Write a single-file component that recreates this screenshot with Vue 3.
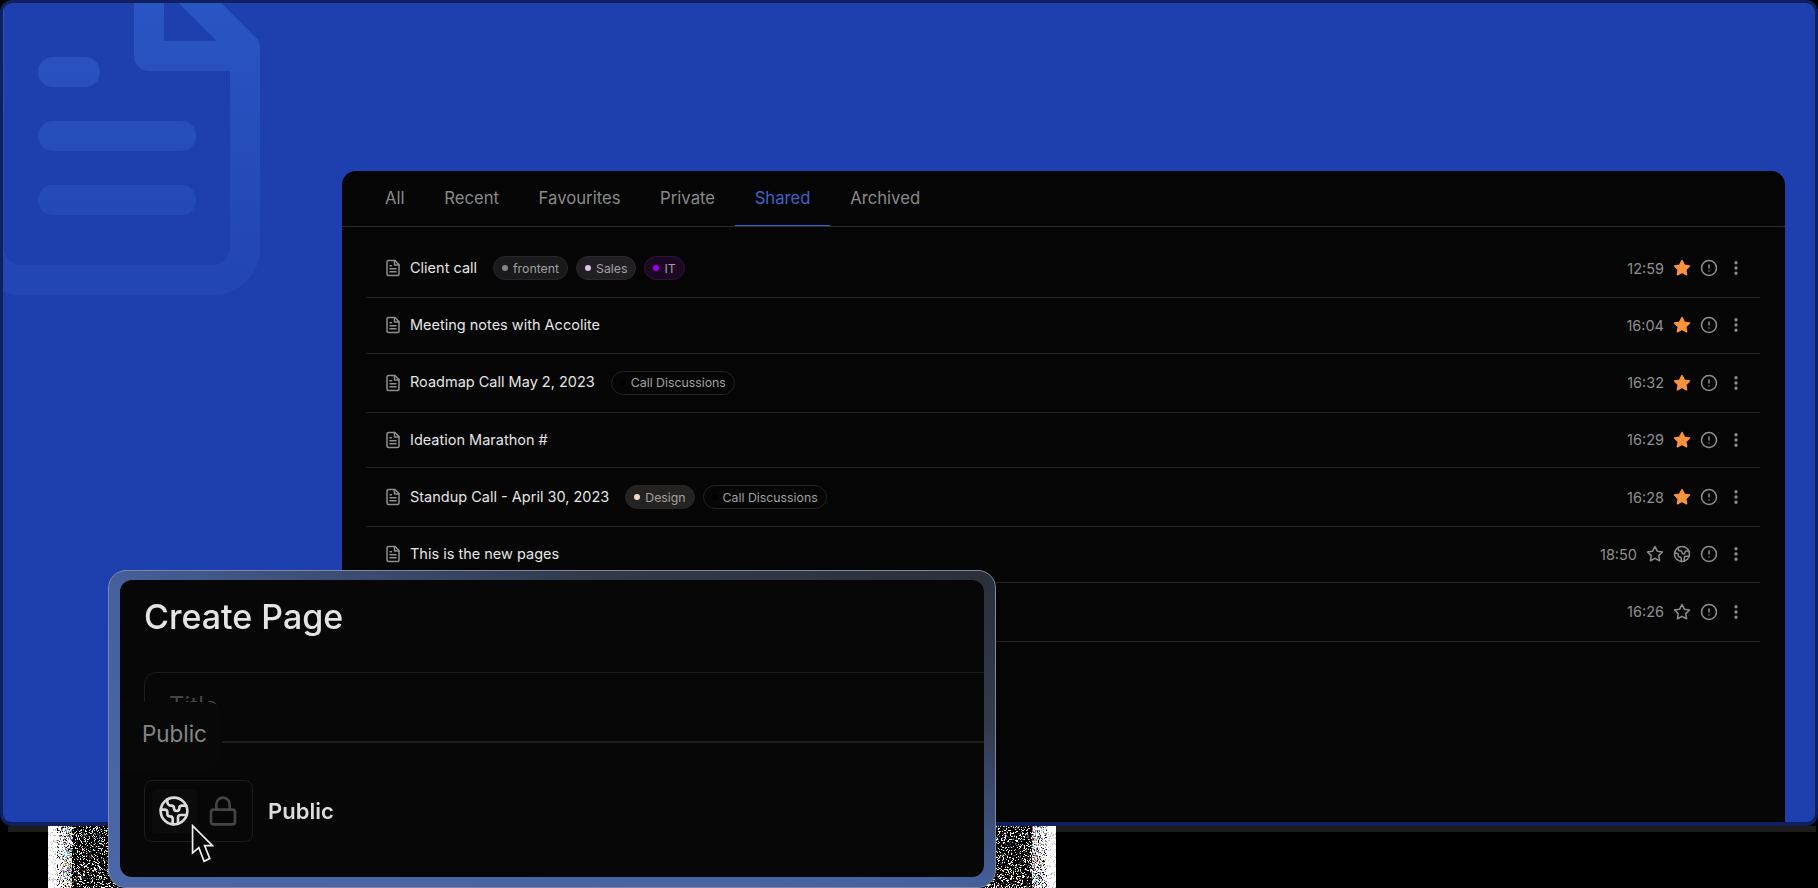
<template>
  <div class="page">
    <section class="hero">
      <svg class="hero-mark" viewBox="0 0 24 24" fill="none" stroke="url(#markFade)" stroke-width="1.875" stroke-linecap="round" stroke-linejoin="round">
        <defs>
          <linearGradient id="markFade" gradientUnits="userSpaceOnUse" x1="12" y1="2" x2="12" y2="22">
            <stop offset="0" stop-color="#2b57c6" />
            <stop offset="1" stop-color="#2246b2" />
          </linearGradient>
        </defs>
        <path d="M14.5 2H6a2 2 0 0 0-2 2v16a2 2 0 0 0 2 2h12a2 2 0 0 0 2-2V7.5L14.5 2z" />
        <polyline points="14 2 14 8 20 8" />
        <path d="M10 9H8" />
        <path d="M16 13H8" />
        <path d="M16 17H8" />
      </svg>

      <div class="panel">
        <nav class="tabs">
          <span
            v-for="tab in tabs"
            :key="tab"
            class="tab"
            :class="{ 'tab--active': tab === 'Shared' }"
          >{{ tab }}</span>
        </nav>

        <ul class="pages">
          <li v-for="(page, i) in pages" :key="i" class="page-row">
            <svg class="doc-icon" viewBox="0 0 24 24" fill="none" stroke="currentColor" stroke-width="2" stroke-linecap="round" stroke-linejoin="round">
              <path d="M14.5 2H6a2 2 0 0 0-2 2v16a2 2 0 0 0 2 2h12a2 2 0 0 0 2-2V7.5L14.5 2z" />
              <polyline points="14 2 14 8 20 8" />
              <path d="M10 9H8" />
              <path d="M16 13H8" />
              <path d="M16 17H8" />
            </svg>
            <span class="page-title">{{ page.title }}</span>
            <div v-if="page.tags.length" class="tags">
              <span
                v-for="tag in page.tags"
                :key="tag.label"
                class="tag"
                :class="'tag--' + tag.kind"
              >
                <i class="tag-dot"></i>{{ tag.label }}
              </span>
            </div>
            <div class="meta">
              <span class="time">{{ page.time }}</span>
              <svg class="meta-icon" :class="{ 'star-on': page.starred }" viewBox="0 0 24 24" :fill="page.starred ? 'currentColor' : 'none'" stroke="currentColor" stroke-width="2" stroke-linecap="round" stroke-linejoin="round">
                <polygon points="12 2 15.09 8.26 22 9.27 17 14.14 18.18 21.02 12 17.77 5.82 21.02 7 14.14 2 9.27 8.91 8.26 12 2" />
              </svg>
              <svg v-if="page.public" class="meta-icon" viewBox="0 0 24 24" fill="none" stroke="currentColor" stroke-width="2" stroke-linecap="round" stroke-linejoin="round">
                <path d="M21.54 15H17a2 2 0 0 0-2 2v4.54" />
                <path d="M7 3.34V5a3 3 0 0 0 3 3a2 2 0 0 1 2 2c0 1.1.9 2 2 2a2 2 0 0 0 2-2c0-1.1.9-2 2-2h3.17" />
                <path d="M11 21.95V18a2 2 0 0 0-2-2a2 2 0 0 1-2-2v-1a2 2 0 0 0-2-2H2.05" />
                <circle cx="12" cy="12" r="10" />
              </svg>
              <svg class="meta-icon" viewBox="0 0 24 24" fill="none" stroke="currentColor" stroke-width="2" stroke-linecap="round" stroke-linejoin="round">
                <circle cx="12" cy="12" r="10" />
                <line x1="12" y1="8" x2="12" y2="12" />
                <line x1="12" y1="16" x2="12.01" y2="16" />
              </svg>
              <svg class="meta-icon" viewBox="0 0 24 24" fill="none" stroke="currentColor" stroke-width="2.4" stroke-linecap="round" stroke-linejoin="round">
                <circle cx="12" cy="5" r="1" />
                <circle cx="12" cy="12" r="1" />
                <circle cx="12" cy="19" r="1" />
              </svg>
            </div>
          </li>
        </ul>
      </div>
    </section>

    <div class="hero-shadow"></div>
    <canvas ref="noise" class="noise" width="1008" height="62"></canvas>

    <div class="modal">
      <div class="modal-card">
        <h1 class="modal-title">Create Page</h1>
        <div class="title-input">Title</div>
        <div class="modal-line"></div>
        <div class="visibility">
          <div class="toggle">
            <span class="toggle-btn toggle-btn--on">
              <svg viewBox="0 0 24 24" fill="none" stroke="currentColor" stroke-width="2" stroke-linecap="round" stroke-linejoin="round">
                <path d="M21.54 15H17a2 2 0 0 0-2 2v4.54" />
                <path d="M7 3.34V5a3 3 0 0 0 3 3a2 2 0 0 1 2 2c0 1.1.9 2 2 2a2 2 0 0 0 2-2c0-1.1.9-2 2-2h3.17" />
                <path d="M11 21.95V18a2 2 0 0 0-2-2a2 2 0 0 1-2-2v-1a2 2 0 0 0-2-2H2.05" />
                <circle cx="12" cy="12" r="10" />
              </svg>
            </span>
            <span class="toggle-btn">
              <svg viewBox="0 0 24 24" fill="none" stroke="currentColor" stroke-width="2" stroke-linecap="round" stroke-linejoin="round">
                <rect x="3" y="11" width="18" height="11" rx="2" ry="2" />
                <path d="M7 11V7a5 5 0 0 1 10 0v4" />
              </svg>
            </span>
          </div>
          <span class="visibility-label">Public</span>
        </div>

        <div class="tooltip">Public</div>
        <svg class="cursor" viewBox="0 0 22 38">
          <path d="M1.5 1.5V27.5L7.5 22.5L12.5 35.5L18 33L13 20.5H20.5Z" fill="#050505" stroke="#f2f2f2" stroke-width="1.6" stroke-linejoin="miter" />
        </svg>
      </div>
    </div>
  </div>
</template>

<script setup>
import { onMounted, ref } from 'vue'

const tabs = ['All', 'Recent', 'Favourites', 'Private', 'Shared', 'Archived']

const call = { label: 'Call Discussions', kind: 'call' }

const pages = [
  {
    title: 'Client call',
    time: '12:59',
    starred: true,
    tags: [
      { label: 'frontent', kind: 'frontend' },
      { label: 'Sales', kind: 'sales' },
      { label: 'IT', kind: 'it' },
    ],
  },
  { title: 'Meeting notes with Accolite', time: '16:04', starred: true, tags: [] },
  { title: 'Roadmap Call May 2, 2023', time: '16:32', starred: true, tags: [call] },
  { title: 'Ideation Marathon #', time: '16:29', starred: true, tags: [] },
  {
    title: 'Standup Call - April 30, 2023',
    time: '16:28',
    starred: true,
    tags: [{ label: 'Design', kind: 'design' }, call],
  },
  { title: 'This is the new pages', time: '18:50', starred: false, public: true, tags: [] },
  // title sits behind the modal
  { title: '', time: '16:26', starred: false, tags: [{ label: '', kind: 'call' }] },
]

const noise = ref(null)

// the dithered strip that peeks out on both sides of the modal
onMounted(() => {
  const ctx = noise.value.getContext('2d')
  const w = noise.value.width
  const h = noise.value.height
  const specks = ['#ffffff', '#e8e8c0', '#3a3ae0', '#d8d020', '#20d8e8', '#d02060', '#808080']
  let seed = 7
  const rand = () => {
    seed = (seed * 16807) % 2147483647
    return seed / 2147483647
  }
  ctx.fillStyle = '#000'
  ctx.fillRect(0, 0, w, h)
  for (let y = 0; y < h; y++) {
    for (let x = 0; x < w; x++) {
      const edge = Math.min(x, w - 1 - x)
      if (edge > 72) continue
      const r = rand()
      if (edge < 9) {
        ctx.fillStyle = r < 0.88 ? '#fff' : '#c4c4c4'
      } else if (edge < 24) {
        const k = (edge - 9) / 15
        if (r < 0.7 - k * 0.35) ctx.fillStyle = '#fff'
        else if (r < 0.85 - k * 0.3) ctx.fillStyle = '#8c8c8c'
        else if (r < 0.9) ctx.fillStyle = specks[Math.floor(rand() * specks.length)]
        else ctx.fillStyle = '#000'
      } else {
        if (r < 0.24) ctx.fillStyle = specks[rand() < 0.6 ? 0 : Math.floor(rand() * specks.length)]
        else if (r < 0.32) ctx.fillStyle = '#4a4a30'
        else ctx.fillStyle = '#000'
      }
      ctx.fillRect(x, y, 1, 1)
    }
  }
})
</script>

<style>
html,
body {
  margin: 0;
  background: #000;
}
</style>

<style scoped>
.page {
  position: relative;
  height: 888px;
  overflow: hidden;
  background: #000;
  font-family: Inter, "Liberation Sans", sans-serif;
}

.hero {
  position: relative;
  z-index: 1;
  display: flex;
  flex-direction: column;
  box-sizing: border-box;
  height: 826px;
  padding: 168px 30px 0 339px;
  overflow: hidden;
  border: 3px solid #10205c;
  border-bottom-width: 4px;
  border-radius: 12px;
  background: #1e40af;
}

.hero-mark {
  position: absolute;
  top: -75px;
  left: -78px;
  width: 384px;
  height: 384px;
}

.hero-shadow {
  height: 6px;
  margin: 0 2px 0 8px;
  background: #1c1c1c;
}

.panel {
  position: relative;
  flex: 1;
  padding: 0 25px 0 24px;
  border-radius: 14px 14px 0 0;
  background: #050505;
}

.tabs {
  display: flex;
  height: 55px;
  margin: 0 -25px 0 -24px;
  padding-left: 23.2px;
  border-bottom: 1px solid #2a2a2a;
}

.tab {
  box-sizing: border-box;
  height: 55px;
  padding: 0 19.8px;
  font-size: 16.7px;
  line-height: 54px;
  color: #8a8a8a;
}

.tab--active {
  border-bottom: 1px solid #3f62c8;
  color: #3f62c8;
}

.pages {
  margin: 0;
  padding: 12px 0 0;
  list-style: none;
}

.page-row {
  display: flex;
  align-items: center;
  padding: 16px 15px 16px 17.5px;
  border-bottom: 1px solid #222;
}

.doc-icon {
  flex: none;
  width: 18px;
  height: 18px;
  margin-right: 8.5px;
  color: #8f8f8f;
}

.page-title {
  font-size: 14.5px;
  font-weight: 400;
  line-height: 22.5px;
  color: #e6e6e6;
}

.tags {
  display: flex;
  gap: 8px;
  margin-left: 16px;
}

.tag {
  display: flex;
  align-items: center;
  gap: 5px;
  box-sizing: border-box;
  height: 24px;
  margin: 1px 0;
  padding: 0 8px;
  border: 1px solid transparent;
  border-radius: 12px;
  font-size: 12.3px;
  color: #a0a0a0;
}

.tag-dot {
  width: 6px;
  height: 6px;
  border-radius: 50%;
}

.tag--frontend {
  border-color: #26262a;
  background: #1a1a1c;
}

.tag--frontend .tag-dot {
  background: #85858a;
}

.tag--sales {
  border-color: #2a282c;
  background: #211f23;
}

.tag--sales .tag-dot {
  background: #dcc6e8;
}

.tag--it {
  border-color: #2c1338;
  background: #1d0824;
}

.tag--it .tag-dot {
  background: #a100e6;
}

.tag--design {
  border-color: #262422;
  background: #252321;
}

.tag--design .tag-dot {
  background: #efd9c9;
}

.tag--call {
  border-color: #222;
  background: #050505;
}

.tag--call .tag-dot {
  background: #000;
}

.meta {
  display: flex;
  align-items: center;
  gap: 9px;
  margin-left: auto;
  color: #8f8f8f;
}

.time {
  font-size: 14.5px;
  color: #8f8f8f;
}

.meta-icon {
  flex: none;
  width: 18px;
  height: 18px;
}

.star-on {
  color: #fb923c;
}

.noise {
  position: absolute;
  z-index: 2;
  top: 826px;
  left: 48px;
}

.modal {
  position: absolute;
  z-index: 3;
  top: 570px;
  left: 108px;
  box-sizing: border-box;
  width: 888px;
  height: 318px;
  padding: 9px 11px 10px;
  border: 1px solid #7f88a3;
  border-radius: 18px;
  background: linear-gradient(to top right, #4b67a8 0%, #46619e 48%, #323a4a 76%, #2b2f38 100%);
}

.modal-card {
  position: relative;
  box-sizing: border-box;
  height: 100%;
  padding: 18px 0 0 24px;
  overflow: hidden;
  border-radius: 12px;
  background: #070707;
}

.modal-title {
  margin: 0;
  font-size: 34px;
  font-weight: 500;
  line-height: 38px;
  color: #e4e4e4;
}

.title-input {
  box-sizing: border-box;
  width: 1000px;
  height: 70px;
  margin-top: 36px;
  padding: 18.5px 24px;
  border: 1px solid #1c1c1c;
  border-radius: 12px;
  font-size: 24px;
  line-height: 28px;
  color: #444;
}

.modal-line {
  height: 1px;
  background: #1e1e1e;
}

.visibility {
  display: flex;
  align-items: center;
  gap: 15px;
  margin-top: 37px;
}

.toggle {
  display: flex;
  gap: 4px;
  box-sizing: border-box;
  width: 109px;
  padding: 8px 7px;
  border: 1px solid #1c1c1c;
  border-radius: 8px;
}

.toggle-btn {
  display: flex;
  align-items: center;
  justify-content: center;
  width: 45px;
  height: 44px;
  border-radius: 4px;
  color: #444;
}

.toggle-btn svg {
  width: 32px;
  height: 32px;
}

.toggle-btn--on {
  background: #0b0b0b;
  color: #dcdcdc;
}

.visibility-label {
  font-size: 22px;
  font-weight: 600;
  color: #dcdcdc;
}

.tooltip {
  position: absolute;
  top: 122px;
  left: 0;
  box-sizing: border-box;
  width: 102px;
  height: 68px;
  padding: 18px 22px;
  border-radius: 0 14px 14px 0;
  background: #080808;
  font-size: 22.4px;
  line-height: 28px;
  color: #858585;
}

.cursor {
  position: absolute;
  top: 244px;
  left: 71px;
  width: 23px;
  height: 40px;
}
</style>
